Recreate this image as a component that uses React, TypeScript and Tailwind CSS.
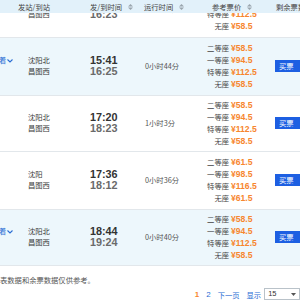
import React from "react";

type Row = {
  from: string;
  to: string;
  dep: string;
  arr: string;
  dur: string;
  prices: string[];
  hl?: boolean;
  h: string;
};

const SEATS = ["二等座", "一等座", "特等座", "无座"];

const rows: Row[] = [
  { from: "沈阳北", to: "昌图西", dep: "17:20", arr: "18:23", dur: "1小时3分", prices: ["58.5", "94.5", "112.5", "58.5"], h: "h-[57px]" },
  { from: "沈阳", to: "昌图西", dep: "17:36", arr: "18:12", dur: "0小时36分", prices: ["61.5", "98.5", "116.5", "61.5"], h: "h-[58px]" },
  { from: "沈阳北", to: "昌图西", dep: "18:44", arr: "19:24", dur: "0小时40分", prices: ["58.5", "94.5", "112.5", "58.5"], hl: true, h: "h-[57px]" },
];

const first: Row = { from: "沈阳北", to: "昌图西", dep: "15:41", arr: "16:25", dur: "0小时44分", prices: ["58.5", "94.5", "112.5", "58.5"], hl: true, h: "h-[58px]" };
const zero: Row = { from: "沈阳北", to: "昌图西", dep: "15:34", arr: "16:23", dur: "0小时49分", prices: ["58.5", "94.5", "112.5", "58.5"], h: "h-[58px]" };

function SortIcon() {
  return (
    <svg width="5" height="6" viewBox="0 0 5 6" className="ml-[6px]">
      <path d="M2.5 0 L5 2.6 H0 Z" fill="#9aa5ad" />
      <path d="M2.5 6 L5 3.4 H0 Z" fill="#9aa5ad" />
    </svg>
  );
}

function TrainRow({ r, button = true }: { r: Row; button?: boolean }) {
  return (
    <div className={`flex ${r.h} border-b border-[#e2e7eb] ${r.hl ? "bg-[#edf7fc]" : "bg-white"}`}>
      <div className="w-[28px] flex flex-col justify-center">
        <div className="h-[11.5px] flex items-center text-[#2a6dd4] text-[7.3px] leading-[11.5px]">
          {r.hl ? (
            <>
              <span className="-ml-[1px]">着</span>
              <svg width="6" height="4" viewBox="0 0 6 4" className="ml-[1px]">
                <path d="M0.5 0.5 L3 3 L5.5 0.5" stroke="#2a6dd4" strokeWidth="1.1" fill="none" />
              </svg>
            </>
          ) : null}
        </div>
        <div className="h-[11.5px]" />
      </div>
      <div className="w-[62px] flex flex-col justify-center text-[7.3px] leading-[11.5px] text-[#3a3a3a]">
        <div>{r.from}</div>
        <div>{r.to}</div>
      </div>
      <div className="w-[55px] flex flex-col justify-center font-['Liberation_Sans',Arial,sans-serif] font-bold text-[10.8px] leading-[11.5px]">
        <div className="text-[#333]">{r.dep}</div>
        <div className="text-[#6a6a6a]">{r.arr}</div>
      </div>
      <div className="w-[45px] flex items-center pt-[1px] text-[7.3px] text-[#555]">{r.dur}</div>
      <div className="w-[85px] flex flex-col justify-center">
        {r.prices.map((p, i) => (
          <div key={i} className="flex items-center h-[12px]">
            <span className="w-[39px] text-right text-[7.3px] text-[#444]">{SEATS[i]}</span>
            <span className="ml-[2px] font-['Liberation_Sans',Arial,sans-serif] font-bold text-[8.6px] text-[#f7862e]">¥{p}</span>
          </div>
        ))}
      </div>
      <div className="flex-1 flex items-center overflow-hidden">
        {button ? (
          <div className="w-[40px] h-[12px] shrink-0 bg-[#1d5fe2] text-white text-[7.3px] leading-[12px] pl-[4px]">买票</div>
        ) : null}
      </div>
    </div>
  );
}

export default function App() {
  return (
    <div className="w-[300px] h-[300px] overflow-hidden bg-white font-['Noto_Sans_CJK_SC','Noto_Sans',sans-serif] flex flex-col">
      <div className="h-[13px] shrink-0 flex items-center bg-[#e2f1fa] text-[7.3px] leading-[10px] text-[#444]">
        <div className="w-[90px] pl-[18px]">发站/到站</div>
        <div className="w-[55px] flex items-center">发/到时间<SortIcon /></div>
        <div className="w-[45px] flex items-center -ml-[1px]">运行时间<SortIcon /></div>
        <div className="w-[85px] pl-[23px] flex items-center">参考票价<SortIcon /></div>
        <div className="flex-1 pl-[2px] whitespace-nowrap overflow-hidden">剩余票数</div>
      </div>
      <div className="h-[25px] shrink-0 overflow-hidden">
        <div className="-mt-[33px]">
          <TrainRow r={zero} button={false} />
        </div>
      </div>
      <TrainRow r={first} />
      {rows.map((r, i) => (
        <TrainRow key={i} r={r} />
      ))}
      <div className="pt-[9px] text-[7.3px] leading-[10px] text-[#555] whitespace-nowrap">表数据和余票数据仅供参考。</div>
      <div className="mt-[3px] flex items-start text-[7.3px] leading-[10px] whitespace-nowrap">
        <div className="w-[196px]" />
        <span className="font-['Liberation_Sans',Arial,sans-serif] font-bold text-[8px] text-[#f7862e] pt-[2px]">1</span>
        <span className="ml-[7px] font-['Liberation_Sans',Arial,sans-serif] text-[8px] text-[#2a6dd4] pt-[2px]">2</span>
        <span className="ml-[7px] text-[#2a6dd4] pt-[2px]">下一页</span>
        <span className="ml-[7px] text-[#2a6dd4] pt-[2px]">显示</span>
        <div className="ml-[3px] w-[36px] h-[12px] border border-[#b9c2c9] bg-white flex items-center justify-between px-[3px]">
          <span className="font-['Liberation_Sans',Arial,sans-serif] text-[7.5px] text-[#333]">15</span>
          <svg width="5" height="3" viewBox="0 0 5 3">
            <path d="M0 0 H5 L2.5 3 Z" fill="#555" />
          </svg>
        </div>
      </div>
    </div>
  );
}
